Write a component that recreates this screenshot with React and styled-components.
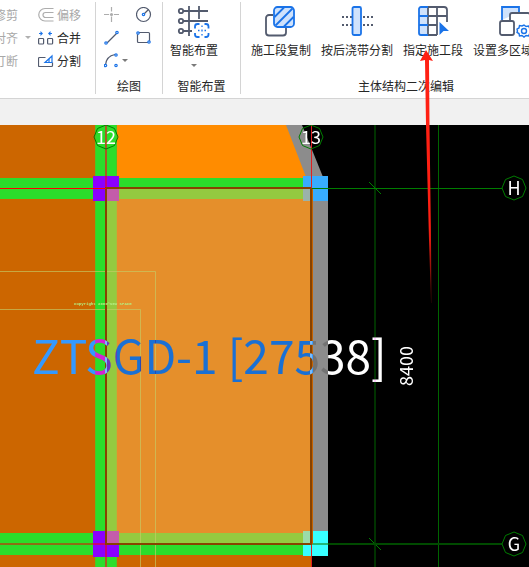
import React from 'react';
import styled, { createGlobalStyle } from 'styled-components';

const GlobalStyle = createGlobalStyle`
  body {
    margin: 0;
    background: #000;
    font-family: 'Noto Sans CJK SC', sans-serif;
    font-size: 12px;
  }
`;

const Page = styled.div`
  position: relative;
  display: flex;
  flex-direction: column;
  min-height: 100vh;
  overflow: hidden;
`;

const Ribbon = styled.header`
  display: flex;
  height: 98px;
  overflow: hidden;
  background: #fff;
  border-bottom: 1px solid #d4d4d4;
`;

const Group = styled.section`
  display: flex;
  flex: none;
  flex-direction: column;
  box-sizing: border-box;
  padding: 3px 0 4px;
`;

const Divider = styled.div`
  flex: none;
  width: 1px;
  margin: 2px 0 4px;
  background: #d4d4d4;
`;

const GroupTitle = styled.div`
  height: 16px;
  line-height: 16px;
  text-align: center;
  color: #262626;
`;

const Columns = styled.div`
  display: flex;
  flex: 1;
  gap: ${props => props.$gap}px;
  padding: 0 ${props => props.$right || 0}px 0 ${props => props.$left || 0}px;
`;

const ModifyPanel = styled(Group)`
  width: 95px;
  overflow: hidden;
`;

const Column = styled.div`
  display: flex;
  flex-direction: column;
  flex: none;
  margin-left: ${props => (props.$cut ? -6 : 0)}px;
`;

const SmallButton = styled.button`
  display: flex;
  align-items: center;
  gap: 3px;
  height: 23px;
  padding: 0;
  border: 0;
  background: none;
  font: inherit;
  line-height: 16px;
  white-space: nowrap;
  color: ${props => (props.disabled ? '#a8a8a8' : '#262626')};
`;

const ToolGrid = styled.div`
  display: grid;
  flex: 1;
  grid-template-columns: 32px 32px;
  grid-auto-rows: 23px;
  padding-right: 2px;
`;

const ToolButton = styled.button`
  display: flex;
  align-items: center;
  justify-content: ${props => (props.$menu ? 'flex-end' : 'center')};
  gap: 4px;
  padding: 0;
  border: 0;
  background: none;
`;

const BigButton = styled.button`
  display: flex;
  flex-direction: column;
  align-items: center;
  align-self: flex-start;
  padding: 0;
  border: 0;
  background: none;
  font: inherit;
  line-height: 16px;
  white-space: nowrap;
  color: #262626;
`;

const BigLabel = styled.span`
  margin: 4px 0 6px;
`;

const Caret = styled.span`
  width: 0;
  height: 0;
  border: 3px solid transparent;
  border-top-color: ${props => (props.$faded ? '#b0b0b0' : '#7a7a7a')};
  border-bottom: 0;
`;

const CaretSlot = styled(Caret)`
  margin-left: 4px;
`;

const Strip = styled.div`
  height: 26px;
  background: #f1f1f1;
`;

const Canvas = styled.main`
  display: flex;
  flex: 1;
  min-height: 0;
`;

const Drawing = styled.svg`
  flex: 1;
  width: 100%;
  isolation: isolate;
  background: #000;
`;

const CadText = styled.text`
  fill: #fff;
  font-family: 'Noto Sans CJK SC', sans-serif;
  font-size: ${props => props.$size}px;
  mix-blend-mode: ${props => (props.$invert ? 'difference' : 'normal')};
`;

const Stamp = styled.text`
  fill: #b4ee80;
  font-family: 'Liberation Mono', monospace;
  font-size: 4px;
  font-weight: bold;
`;

const Pointer = styled.svg`
  position: absolute;
  top: 0;
  left: 0;
  pointer-events: none;
`;

const INK = '#535b6e';
const BLUE = '#1a73e8';
const LIGHT = '#cfe2fc';

const SmallIcon = ({ children, stroke = INK, width = 16 }) => (
  <svg width={width} height="16" viewBox={`0 0 ${width} 16`} fill="none" stroke={stroke} strokeWidth="1.2" aria-hidden="true">
    {children}
  </svg>
);

const BigIcon = ({ children }) => (
  <svg width="34" height="35" viewBox="0 0 34 35" fill="none" stroke={INK} strokeWidth="1.8" aria-hidden="true">
    {children}
  </svg>
);

const Dot = ({ x, y }) => <circle cx={x} cy={y} r="1.2" stroke={BLUE} fill="#fff" strokeWidth="1.2" />;

const OffsetIcon = () => (
  <SmallIcon stroke="#adadad">
    <path d="M15.5 1.5H7a6 6 0 0 0 0 12.500h8.500M15.500 5.500H7.500a2.500 2.500 0 0 0 0 5h8" />
  </SmallIcon>
);

const MergeIcon = () => (
  <SmallIcon>
    <rect x="0.600" y="8.500" width="5" height="5.500" rx="0.800" />
    <rect x="9.600" y="8.500" width="5" height="5.500" rx="0.800" />
    <path d="M1 3.500h3M14 3.500h-3" stroke={BLUE} />
    <path d="M2.500 1L5 3.500 2.500 6zM12.500 1L10 3.500 12.500 6z" fill={BLUE} stroke="none" />
  </SmallIcon>
);

const SplitIcon = () => (
  <SmallIcon>
    <path d="M7.500 4.500h-6a1 1 0 0 0-1 1v7a1 1 0 0 0 1 1h12a1 1 0 0 0 1-1V9.500" />
    <path d="M14 3L7 9.500h7z" stroke={BLUE} />
    <path d="M11 6v3.500" stroke={BLUE} />
  </SmallIcon>
);

const PointIcon = () => (
  <SmallIcon stroke="#adadad">
    <path d="M7.500 0v4.500M7.500 9.500V15M0 7.500h5M10 7.500h5" />
    <circle cx="7.500" cy="7.500" r="1.600" fill="#adadad" stroke="none" />
  </SmallIcon>
);

const CircleIcon = () => (
  <SmallIcon>
    <circle cx="7.500" cy="7.500" r="7" />
    <path d="M7.500 7.500l5-5" />
    <Dot x="7.500" y="7.500" />
  </SmallIcon>
);

const LineIcon = () => (
  <SmallIcon>
    <path d="M3 13L13 3" />
    <Dot x="2" y="13" />
    <Dot x="13" y="2.500" />
  </SmallIcon>
);

const RectIcon = () => (
  <SmallIcon>
    <rect x="1.500" y="2.500" width="12" height="10" rx="1" />
    <Dot x="2" y="3" />
    <Dot x="13" y="12" />
  </SmallIcon>
);

const ArcIcon = () => (
  <SmallIcon width={14}>
    <path d="M1.500 12C2 6 5.500 2.500 11 1.500" />
    <Dot x="1.500" y="12.500" />
    <Dot x="12" y="2" />
    <Dot x="12" y="12.500" />
  </SmallIcon>
);

const SmartIcon = () => (
  <BigIcon>
    <path d="M6 8h25M6 18h25M6 28h9M12 3v30M22 3v13" />
    <g fill="#fff">
      <circle cx="4" cy="8" r="2.200" />
      <circle cx="4" cy="18" r="2.200" />
      <circle cx="4" cy="28" r="2.200" />
    </g>
    <path
      d="M18 25.500v-2a2.500 2.500 0 0 1 2.500-2.500H22.500M27.500 21h1.500a2.500 2.500 0 0 1 2.500 2.500v2M31.500 30v1.500a2.500 2.500 0 0 1-2.500 2.500h-1.500M22.500 34h-2a2.500 2.500 0 0 1-2.500-2.500V30"
      stroke={BLUE}
    />
    <path d="M25 26.500v2M21 27.500h1.500M27.500 27.500H29M25 22.500V24M25 31v1.500" stroke={BLUE} strokeWidth="1.300" />
  </BigIcon>
);

const CopyIcon = () => (
  <BigIcon>
    <path d="M9 12H5a3 3 0 0 0-3 3v14.500a3 3 0 0 0 3 3h14a3 3 0 0 0 3-3V25" />
    <rect x="10" y="4" width="20" height="20" rx="3.500" stroke={BLUE} fill={LIGHT} />
    <path d="M10.500 14L20 4.500M11.500 22.500L28.500 5.500M20 23.500l9.500-9.500" stroke={BLUE} />
  </BigIcon>
);

const StripIcon = () => (
  <BigIcon>
    <path d="M2 14h10M2 22h10M23 14h10M23 22h10" strokeDasharray="2 2" />
    <rect x="12.500" y="4" width="8.500" height="28" rx="1.500" stroke={BLUE} fill={LIGHT} />
  </BigIcon>
);

const AssignIcon = () => (
  <BigIcon>
    <path d="M12 4H5a2 2 0 0 0-2 2v24a2 2 0 0 0 2 2h7z" fill={LIGHT} stroke="none" />
    <path d="M12 4h16a3 3 0 0 1 3 3v12M12 13h19M12 22h9M12 32h9M12 4v28M21 4v28" />
    <path d="M12 4H5a2 2 0 0 0-2 2v24a2 2 0 0 0 2 2h7M3 13h9M3 22h9" stroke={BLUE} />
    <path d="M23.500 19l9.500 9h-5.500l-4 4z" fill={BLUE} stroke="none" />
  </BigIcon>
);

const AreaIcon = () => (
  <BigIcon>
    <path d="M4 17V4h17v5" fill={LIGHT} stroke={BLUE} />
    <path d="M12 17V12a2 2 0 0 1 2-2h16a2 2 0 0 1 2 2v8" fill="#fff" />
    <rect x="2" y="18" width="14" height="14" rx="2" fill="#fff" />
    <path
      d="M26 22l2 1.500 2.500-.5 1 2 2 1-.500 2 .500 2-2 1-1 2-2.500-.5-2 1.500-2-1.500-2.500.5-.500-2.500-2-1 .500-1.500-.500-2 2-1 .500-2.500 2.500.5z"
      fill="#fff"
      stroke={BLUE}
      strokeWidth="1.400"
    />
    <circle cx="26" cy="28" r="2.500" stroke={BLUE} strokeWidth="1.400" />
  </BigIcon>
);

const editTools = [
  { label: '施工段复制', Icon: CopyIcon },
  { label: '按后浇带分割', Icon: StripIcon },
  { label: '指定施工段', Icon: AssignIcon },
  { label: '设置多区域属性', Icon: AreaIcon },
];

const bubbles = [
  { name: '12', x: 106, y: 12 },
  { name: '13', x: 311, y: 12 },
  { name: 'H', x: 514, y: 63 },
  { name: 'G', x: 514, y: 419 },
];

const AxisBubble = ({ x, y, name }) => (
  <g transform={`translate(${x} ${y})`}>
    <path d="M0-12L8.500-8.500 12 0 8.500 8.500 0 12-8.500 8.500-12 0-8.500-8.500z" fill="none" stroke="#007d00" />
    <CadText $size={18} y="7" textAnchor="middle">
      {name}
    </CadText>
  </g>
);

const FloorPlan = () => (
  <Drawing aria-label="ZTSGD-1">
    {/* slabs */}
    <rect width="311" height="100%" fill="#cc6600" />
    <path d="M117 0h170l22 54H117z" fill="#ff8c00" />
    <path d="M287 0h24v53h-3z" fill="#000" />
    {/* walls */}
    <path d="M286 0h16l21 52h-17z" fill="#8c8c8c" />
    <rect x="311" y="63" width="17" height="356" fill="#8c8c8c" />
    {/* beams */}
    <rect x="95" y="0" width="22" height="100%" fill="#4fc423" />
    <rect x="96" y="0" width="20" height="100%" fill="#2bdd2b" />
    <rect y="53" width="303" height="21" fill="#2bdd2b" />
    <rect y="408" width="303" height="22" fill="#2bdd2b" />
    {/* columns */}
    <rect x="93" y="51" width="26" height="25" fill="#8b00ff" />
    <rect x="93" y="406" width="26" height="26" fill="#8b00ff" />
    <rect x="303" y="51" width="25" height="25" fill="#38acff" />
    <rect x="303" y="406" width="25" height="25" fill="#38ffff" />
    {/* selected section */}
    <rect x="106" y="63" width="205" height="356" fill="#fdb855" fillOpacity="0.5" />
    {/* sheet frame */}
    <path d="M0 146.500h155.500V2000M0 184.500h140.500V2000" fill="none" stroke="#c4cc66" strokeOpacity="0.65" />
    {/* axes */}
    <path d="M375 0V2000M438.500 0V2000" stroke="#006400" />
    <path d="M312 63.500h190M369 57l12 12M369 413l12 12" stroke="#007d00" fill="none" />
    <path d="M312 419h190" stroke="#004a00" strokeWidth="2" />
    <path d="M311 419h17" stroke="#20b878" strokeWidth="2" />
    <path d="M0 419h106" stroke="#8c6e14" strokeWidth="2" />
    <path d="M106 0v63M106 420V2000" stroke="#a85a20" strokeWidth="2" />
    <path d="M106 51v12M106 420v12M93 419h13" stroke="#c80078" strokeWidth="2" />
    <path d="M312.500 64v355" stroke="#c46200" />
    <path d="M106 63h205v356H106z" fill="none" stroke="#874200" strokeWidth="2" />
    <path d="M0 63.500h106" stroke="#ff0000" />
    <path d="M311.500 0v63M311.500 420V2000" stroke="#e02020" />
    {bubbles.map(bubble => (
      <AxisBubble key={bubble.name} {...bubble} />
    ))}
    <Stamp x="74" y="180">
      Copyright 2009©NEW SPACE
    </Stamp>
    <CadText $size={46} $invert x="32" y="249">
      ZTSGD-1 [27538]
    </CadText>
    <CadText $size={18} transform="translate(413 261) rotate(-90)">
      8400
    </CadText>
  </Drawing>
);

const App = () => (
  <Page>
    <GlobalStyle />
    <Ribbon>
      <ModifyPanel>
        <Columns $gap={7}>
          <Column $cut>
            <SmallButton disabled>修剪</SmallButton>
            <SmallButton disabled>
              对齐
              <CaretSlot $faded />
            </SmallButton>
            <SmallButton disabled>打断</SmallButton>
          </Column>
          <Column>
            <SmallButton disabled>
              <OffsetIcon />
              偏移
            </SmallButton>
            <SmallButton>
              <MergeIcon />
              合并
            </SmallButton>
            <SmallButton>
              <SplitIcon />
              分割
            </SmallButton>
          </Column>
        </Columns>
      </ModifyPanel>
      <Divider />
      <Group>
        <ToolGrid>
          <ToolButton aria-label="点" disabled>
            <PointIcon />
          </ToolButton>
          <ToolButton aria-label="圆">
            <CircleIcon />
          </ToolButton>
          <ToolButton aria-label="直线">
            <LineIcon />
          </ToolButton>
          <ToolButton aria-label="矩形">
            <RectIcon />
          </ToolButton>
          <ToolButton aria-label="弧" $menu>
            <ArcIcon />
            <Caret />
          </ToolButton>
        </ToolGrid>
        <GroupTitle>绘图</GroupTitle>
      </Group>
      <Divider />
      <Group>
        <Columns $gap={10} $left={7} $right={22}>
          <BigButton>
            <SmartIcon />
            <BigLabel>智能布置</BigLabel>
            <Caret />
          </BigButton>
        </Columns>
        <GroupTitle>智能布置</GroupTitle>
      </Group>
      <Divider />
      <Group>
        <Columns $gap={10} $left={10} $right={14}>
          {editTools.map(({ label, Icon }) => (
            <BigButton key={label}>
              <Icon />
              <BigLabel>{label}</BigLabel>
            </BigButton>
          ))}
        </Columns>
        <GroupTitle>主体结构二次编辑</GroupTitle>
      </Group>
    </Ribbon>
    <Strip />
    <Canvas>
      <FloorPlan />
    </Canvas>
    <Pointer width="440" height="310" aria-hidden="true">
      <defs>
        <linearGradient id="fade" x1="0" y1="50" x2="0" y2="303" gradientUnits="userSpaceOnUse">
          <stop offset="0.700" stopColor="#ff2013" />
          <stop offset="1" stopColor="#ff2013" stopOpacity="0.200" />
        </linearGradient>
      </defs>
      <path d="M426 50l7 11-4-1 .500 65 1.500 115 .500 63h-.500l-2-63-3-115-1-65-5 1z" fill="url(#fade)" />
    </Pointer>
  </Page>
);

export default App;
